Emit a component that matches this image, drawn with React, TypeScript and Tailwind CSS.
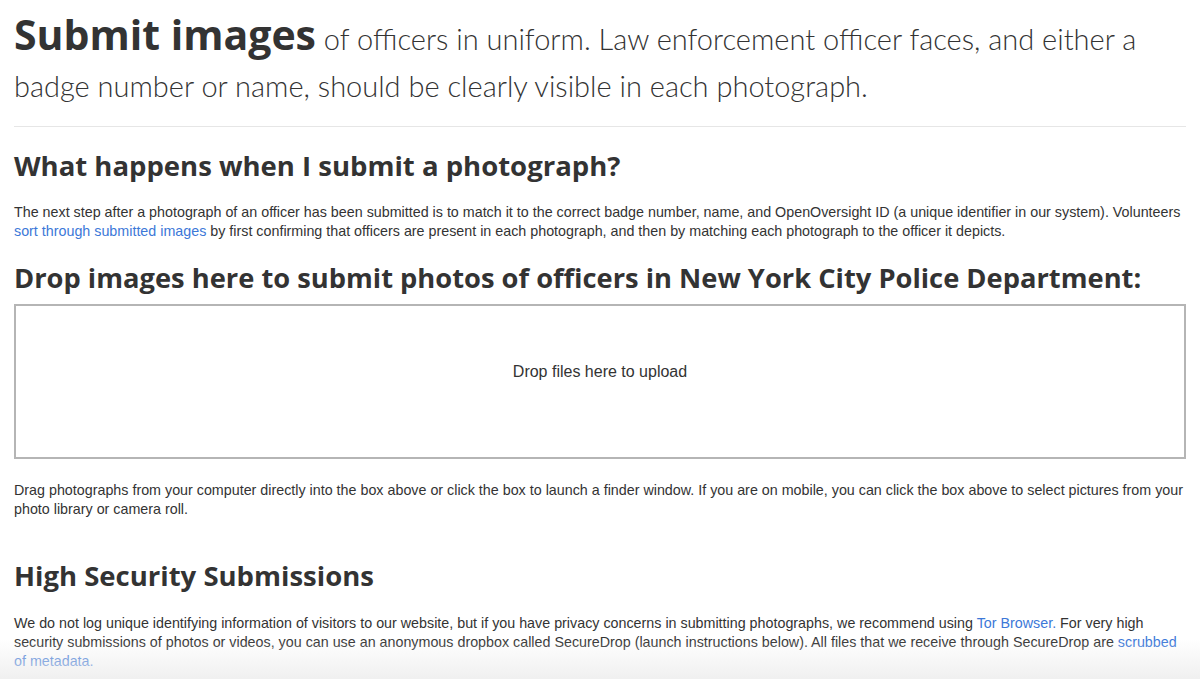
import React from 'react'

const head = "font-['Open_Sans','Lato',sans-serif] text-[#333]"
const body = "font-['Liberation_Sans','Arial',sans-serif] text-[14.3px] leading-[19px] text-[#333]"
const link = 'text-[#3c78d8]'

const App = () => {
    return (
        <div className="relative w-[1200px] h-[679px] overflow-hidden bg-white">
            <div className="px-[14px] pt-[11px]">

                {/* ---- intro ----*/}
                <h1 className="font-['Lato',sans-serif] text-[#333] text-[29px] leading-[47px] font-light">
                    <span className="font-['Open_Sans',sans-serif] text-[41px] font-bold">Submit images</span> of officers in uniform. Law enforcement officer faces, and either a badge number or name, should be clearly visible in each photograph.
                </h1>

                <hr className="mt-[17px] border-t border-[#e6e6e6]" />

                {/* ---- what happens ----*/}
                <h2 className={`${head} mt-[20px] text-[27.5px] leading-[38px] font-bold`}>What happens when I submit a photograph?</h2>
                <p className={`${body} mt-[18px]`}>
                    The next step after a photograph of an officer has been submitted is to match it to the correct badge number, name, and OpenOversight ID (a unique identifier in our system). Volunteers <a className={link}>sort through submitted images</a> by first confirming that officers are present in each photograph, and then by matching each photograph to the officer it depicts.
                </p>

                {/* ---- dropzone ----*/}
                <h2 className={`${head} mt-[18px] text-[27.3px] leading-[38px] font-bold`}>Drop images here to submit photos of officers in New York City Police Department:</h2>
                <div className="mt-[7px] h-[155px] border-2 border-[#b5b5b5] flex items-center justify-center pb-[20px]">
                    <span className="font-['Liberation_Sans','Arial',sans-serif] text-[16px] text-[#333]">Drop files here to upload</span>
                </div>
                <p className={`${body} mt-[22px]`}>
                    Drag photographs from your computer directly into the box above or click the box to launch a finder window. If you are on mobile, you can click the box above to select pictures from your photo library or camera roll.
                </p>

                {/* ---- secure ----*/}
                <h2 className={`${head} mt-[39px] text-[27.5px] leading-[36px] font-bold`}>High Security Submissions</h2>
                <p className={`${body} mt-[20px]`}>
                    We do not log unique identifying information of visitors to our website, but if you have privacy concerns in submitting photographs, we recommend using <a className={link}>Tor Browser.</a> For very high security submissions of photos or videos, you can use an anonymous dropbox called SecureDrop (launch instructions below). All files that we receive through SecureDrop are <a className={link}>scrubbed of metadata.</a>
                </p>
            </div>
            <div className="absolute left-0 right-0 bottom-0 h-[40px] bg-gradient-to-b from-white/0 to-[#ececec]/80" />
        </div>
    )
}

export default App
